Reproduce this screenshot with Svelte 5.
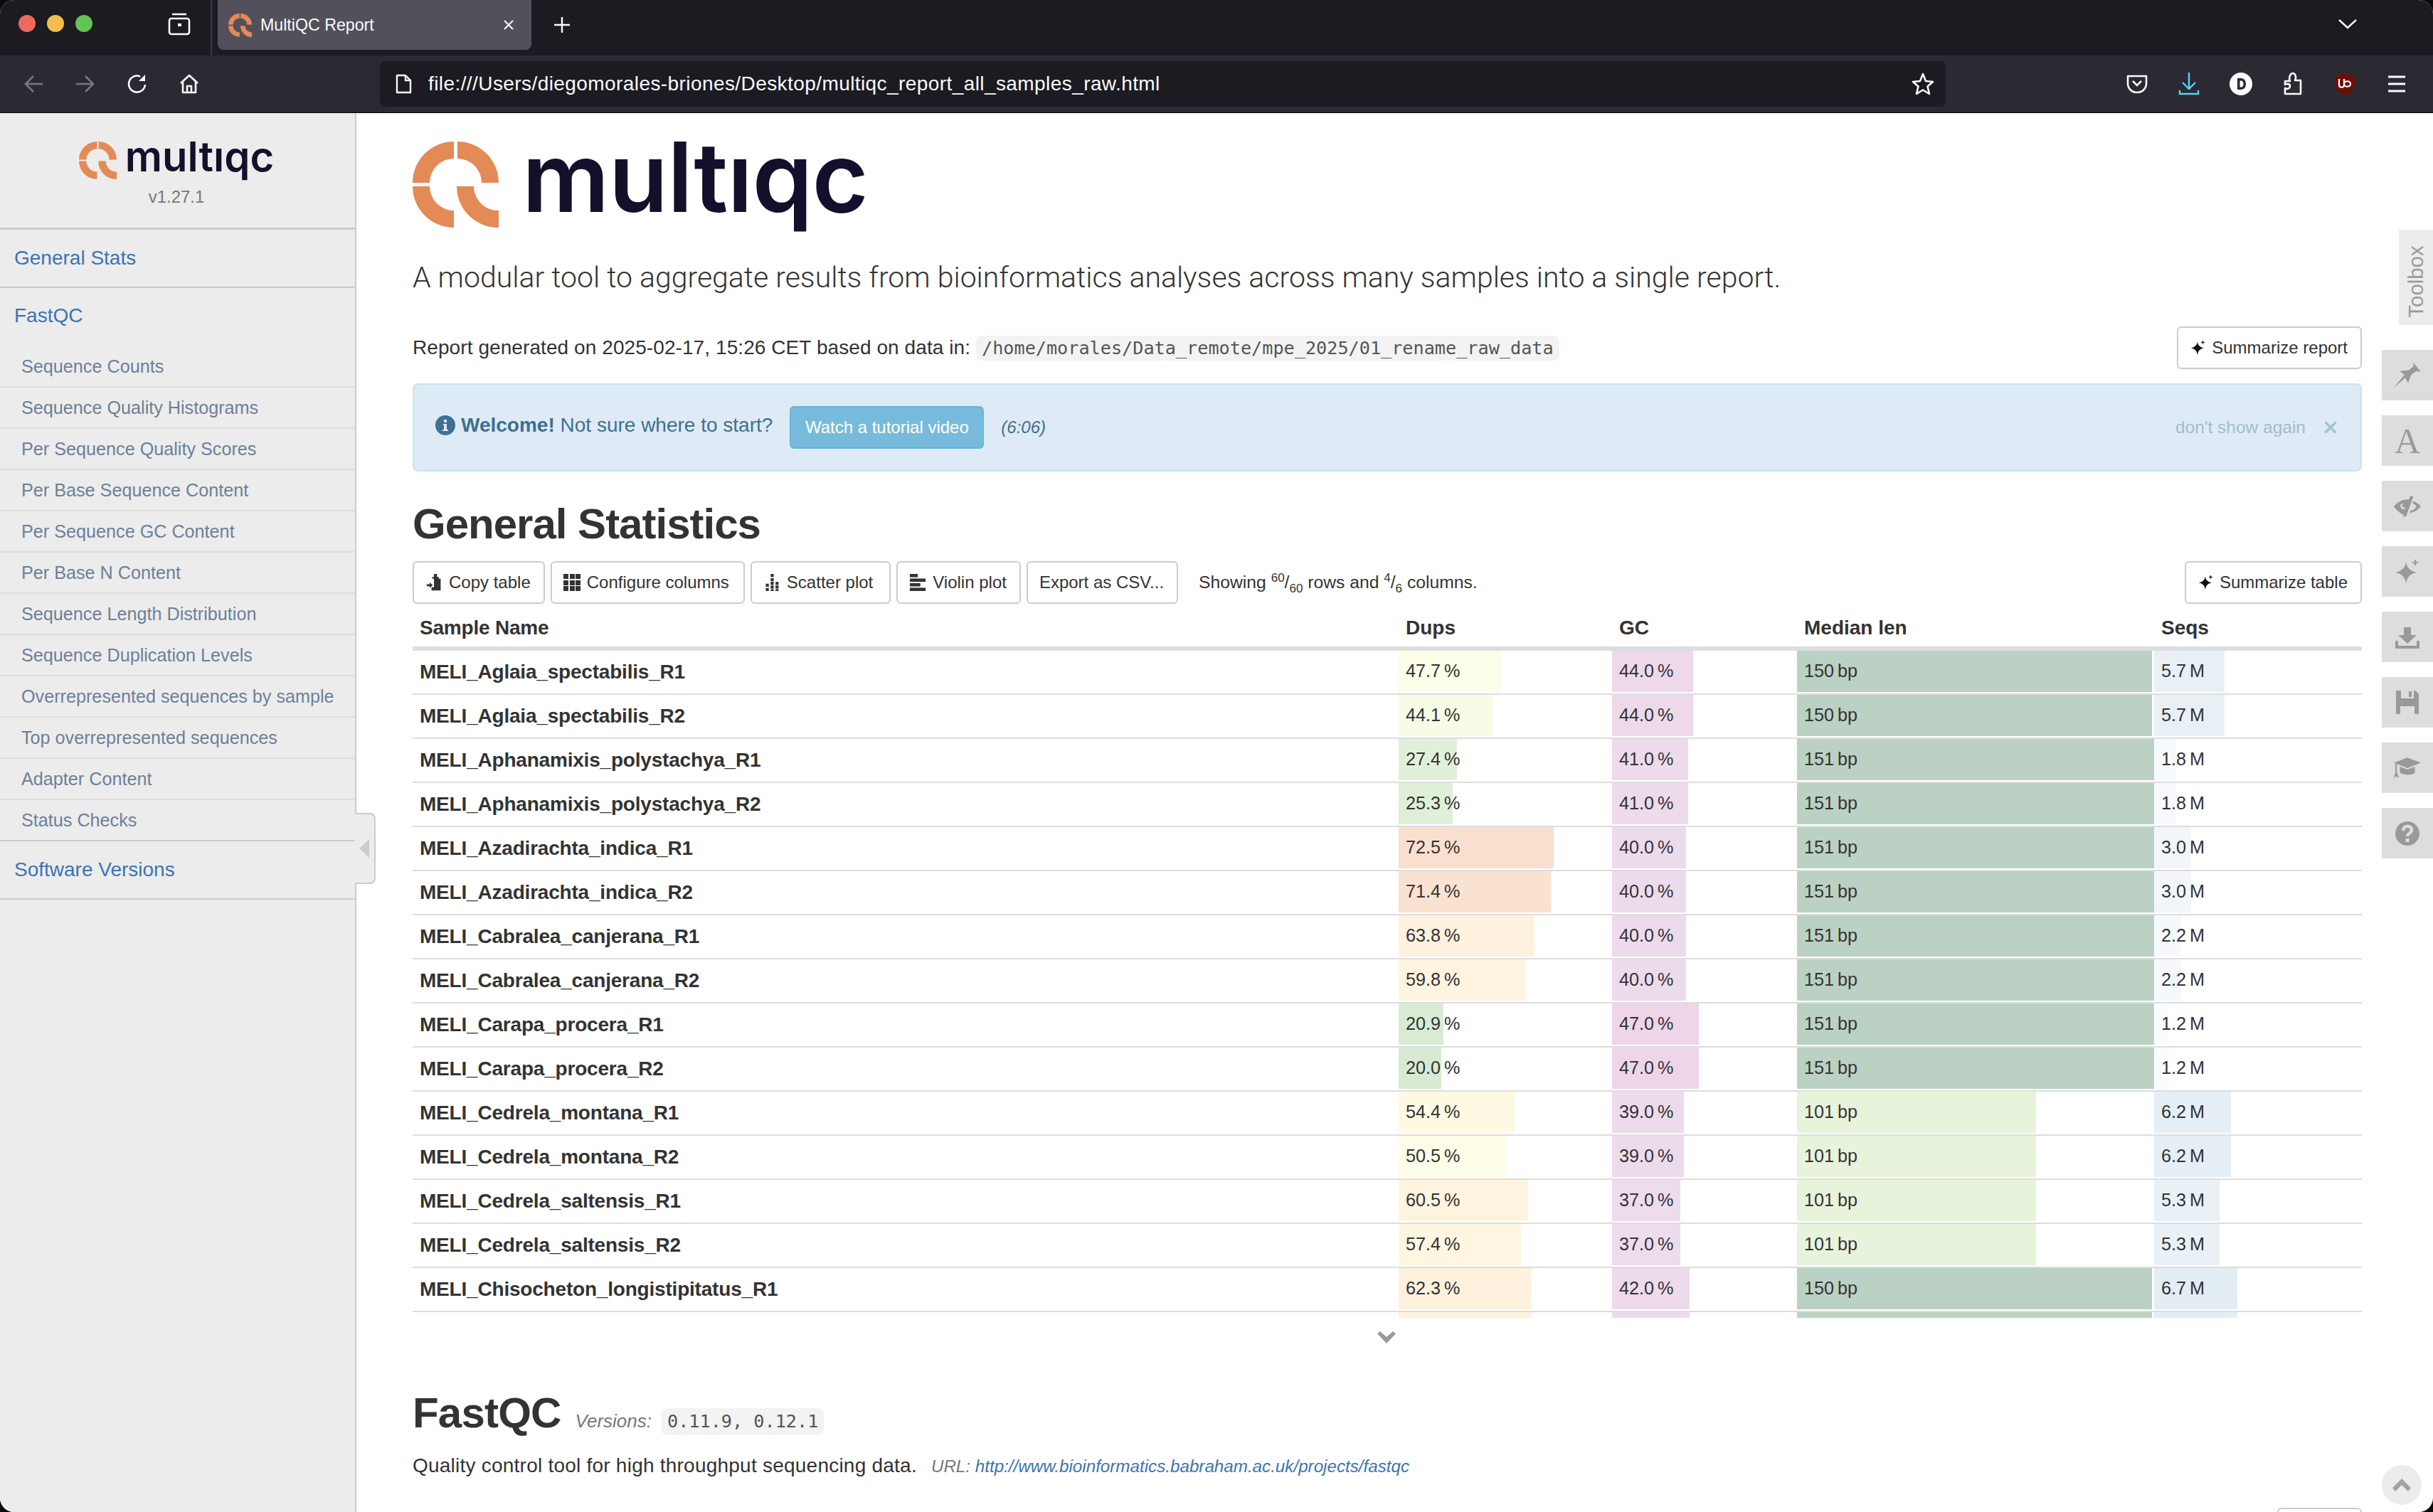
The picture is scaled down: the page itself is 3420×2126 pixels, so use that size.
<script>
  const subs = ['Sequence Counts','Sequence Quality Histograms','Per Sequence Quality Scores','Per Base Sequence Content','Per Sequence GC Content','Per Base N Content','Sequence Length Distribution','Sequence Duplication Levels','Overrepresented sequences by sample','Top overrepresented sequences','Adapter Content','Status Checks'];
  const raw = [
    ['Aglaia_spectabilis_R1',47.7,44,150,5.7],['Aglaia_spectabilis_R2',44.1,44,150,5.7],
    ['Aphanamixis_polystachya_R1',27.4,41,151,1.8],['Aphanamixis_polystachya_R2',25.3,41,151,1.8],
    ['Azadirachta_indica_R1',72.5,40,151,3.0],['Azadirachta_indica_R2',71.4,40,151,3.0],
    ['Cabralea_canjerana_R1',63.8,40,151,2.2],['Cabralea_canjerana_R2',59.8,40,151,2.2],
    ['Carapa_procera_R1',20.9,47,151,1.2],['Carapa_procera_R2',20.0,47,151,1.2],
    ['Cedrela_montana_R1',54.4,39,101,6.2],['Cedrela_montana_R2',50.5,39,101,6.2],
    ['Cedrela_saltensis_R1',60.5,37,101,5.3],['Cedrela_saltensis_R2',57.4,37,101,5.3],
    ['Chisocheton_longistipitatus_R1',62.3,42,150,6.7]
  ];
  const ramp = (stops, v) => {
    let a = stops[0], b = stops[stops.length - 1];
    for (let i = 0; i < stops.length - 1; i++) if (v >= stops[i][0] && v <= stops[i + 1][0]) { a = stops[i]; b = stops[i + 1]; }
    const t = b[0] === a[0] ? 0 : (v - a[0]) / (b[0] - a[0]);
    return `rgb(${[1, 2, 3].map((k) => Math.round(a[k] + (b[k] - a[k]) * t)).join(',')})`;
  };
  const dupStops = [[20,216,235,210],[27,227,240,216],[44,247,252,230],[50,254,255,233],[57,254,246,224],[64,254,241,221],[72.5,249,224,206]];
  const seqStops = [[1.2,250,252,254],[1.8,247,250,253],[3,242,246,251],[5.7,232,240,246],[6.7,226,237,244]];
  const gcStops = [[37,236,220,236],[44,237,217,233],[47,238,213,232]];
  const rows = raw.map(([n, d, g, m, s]) => ({
    name: 'MELI_' + n, d: d.toFixed(1), g: g.toFixed(1), m, s: s.toFixed(1),
    dw: d * 3, dc: ramp(dupStops, d), gw: g * 2.6, gc: ramp(gcStops, g),
    mw: m === 150 ? 499 : m === 151 ? 502 : 336, mc: m === 101 ? '#e8f3db' : '#bad1c3',
    sw: s * 17.4, sc: ramp(seqStops, s)
  }));
  const tail = rows[rows.length - 1];
  const toolIcons = ['pin','font','eye','spark','down','save','edu','help'];
</script>

{#snippet qlogo(cls)}
  <svg class={cls} viewBox="0 0 121 121" aria-hidden="true">
    <g fill="#e48a56">
      <path d="M0 58A58 58 0 0 1 58 0V24A34 34 0 0 0 24 58Z"/>
      <path d="M63 0A58 58 0 0 1 121 58H97A34 34 0 0 0 63 24Z"/>
      <path d="M0 63A58 58 0 0 0 58 121V97A34 34 0 0 1 24 63Z"/>
      <path d="M62 63H86A34 34 0 0 0 121 97V121A58 58 0 0 1 62 63Z"/>
    </g>
  </svg>
{/snippet}

{#snippet spark(cls)}
  <svg class={cls} viewBox="0 0 34 34" aria-hidden="true">
    <path d="M15 3Q16.500 15 30 18Q16.500 20 15 34Q13.500 20 0 18Q13.500 15 15 3Z"/>
    <path d="M27 0H29V3H32V5H29V8H27V5H24V3H27Z"/>
  </svg>
{/snippet}

<div class="window">
  <header class="tabbar">
    <div class="lights"><i class="red"></i><i class="yellow"></i><i class="green"></i></div>
    <svg class="tabs-ico" viewBox="0 0 32 32" fill="none" stroke="#fbfbfe" stroke-width="2.600" aria-hidden="true">
      <path d="M6 2H26"/><rect x="2" y="8" width="28" height="22" rx="3"/><rect x="14" y="15" width="5" height="4" fill="#fbfbfe" stroke="none"/>
    </svg>
    <div class="tab">
      {@render qlogo('fav')}
      <span class="tab-title">MultiQC Report</span>
      <svg class="tab-x" viewBox="0 0 16 16" stroke="#fbfbfe" stroke-width="2" aria-hidden="true"><path d="M2 2L14 14M14 2L2 14"/></svg>
    </div>
    <svg class="plus" viewBox="0 0 24 24" stroke="#fbfbfe" stroke-width="2.400" aria-hidden="true"><path d="M12 1V23M1 12H23"/></svg>
    <svg class="tabs-down" viewBox="0 0 26 14" fill="none" stroke="#fbfbfe" stroke-width="2.400" aria-hidden="true"><path d="M1 1L13 12L25 1"/></svg>
  </header>

  <nav class="toolbar">
    <div class="nav-btns">
      <svg viewBox="0 0 28 28" fill="none" stroke="#77777e" stroke-width="2.600" aria-hidden="true"><path d="M27 14H3M14 3L3 14L14 25"/></svg>
      <svg viewBox="0 0 28 28" fill="none" stroke="#77777e" stroke-width="2.600" aria-hidden="true"><path d="M1 14H25M14 3L25 14L14 25"/></svg>
      <svg viewBox="0 0 28 28" fill="none" stroke="#fbfbfe" stroke-width="2.600" aria-hidden="true"><path d="M25 15A11.500 11.500 0 1 1 18 3.500"/><path d="M25 1V10H16Z" fill="#fbfbfe" stroke="none"/></svg>
      <svg viewBox="0 0 28 28" fill="none" stroke="#fbfbfe" stroke-width="2.600" stroke-linejoin="round" aria-hidden="true"><path d="M2 13L14 2L26 13M5 11V26H23V11M11 26V17H17V26"/></svg>
    </div>
    <div class="urlbar">
      <svg class="file-ico" viewBox="0 0 24 28" fill="none" stroke="#fbfbfe" stroke-width="2.400" aria-hidden="true"><path d="M3 2H15L22 9V26H3Z" stroke-linejoin="round"/><path d="M15 2V9H22"/></svg>
      <span class="url">file:///Users/diegomorales-briones/Desktop/multiqc_report_all_samples_raw.html</span>
      <svg class="star" viewBox="0 0 32 32" fill="none" stroke="#fbfbfe" stroke-width="2.600" stroke-linejoin="round" aria-hidden="true"><path d="M16 2L20 12L30 13L22.500 19.500L25 30L16 24.500L7 30L9.500 19.500L2 13L12 12Z"/></svg>
    </div>
    <div class="ext">
      <svg viewBox="0 0 32 32" fill="none" stroke="#fbfbfe" stroke-width="2.600" aria-hidden="true"><path d="M3 5H29V15C29 23 23 28 16 28C9 28 3 23 3 15Z" stroke-linejoin="round"/><path d="M10 12L16 18L22 12"/></svg>
      <svg viewBox="0 0 32 32" fill="none" stroke="#5ad2f2" stroke-width="2.400" aria-hidden="true"><path d="M16 0V23M7 14L16 23L25 14M3 25V30H29V25"/></svg>
      <svg viewBox="0 0 32 32" aria-hidden="true"><circle cx="16" cy="16" r="16" fill="#fbfbfe"/><path d="M11 8H16C21 8 23 12 23 16C23 20 21 24 16 24H11ZM14.500 11.500V20.500H16C18.500 20.500 19.500 18.500 19.500 16C19.500 13.500 18.500 11.500 16 11.500Z" fill="#2b2a33" fill-rule="evenodd"/></svg>
      <svg viewBox="0 0 32 32" fill="none" stroke="#fbfbfe" stroke-width="2.600" stroke-linejoin="round" aria-hidden="true"><path d="M5 12H12C10 8 12 1 16 1C20 1 21 8 19 11H27V30H5V22C9 24 12 22 12 19C12 16 8 15 5 17Z"/></svg>
      <svg viewBox="0 0 32 32" aria-hidden="true"><path d="M16 0L20 3L30 5V17C30 24 23 29 16 32C9 29 2 24 2 17V5L12 3Z" fill="#6d0f08"/><path d="M8 9V17C8 22 15 22 15 17V9M15 16C15 11 24 11 24 16C24 21 15 21 15 16" fill="none" stroke="#fff" stroke-width="2.200"/></svg>
      <svg viewBox="0 0 32 32" stroke="#fbfbfe" stroke-width="3" aria-hidden="true"><path d="M4 6H28M4 16H28M4 26H28"/></svg>
    </div>
  </nav>

  <div class="page">
    <aside class="sidebar">
      <div class="side-logo">
        <div class="side-brand">
          {@render qlogo('q-small')}
          <span class="word word-small">multıqc</span>
        </div>
        <div class="version">v1.27.1</div>
      </div>
      <a class="top">General Stats</a>
      <a class="top nob">FastQC</a>
      <ul class="subs">
        {#each subs as s}<li>{s}</li>{/each}
      </ul>
      <a class="top">Software Versions</a>
    </aside>

    <main class="main">
      <div class="brand">
        {@render qlogo('q-big')}
        <span class="word word-big">multıqc</span>
      </div>
      <p class="lead">A modular tool to aggregate results from bioinformatics analyses across many samples into a single report.</p>

      <div class="report">
        <div class="report-text">Report generated on 2025-02-17, 15:26 CET based on data in: <code>/home/morales/Data_remote/mpe_2025/01_rename_raw_data</code></div>
        <button class="btn">{@render spark('ico-s')}Summarize report</button>
      </div>

      <div class="alert">
        <svg class="info" viewBox="0 0 28 28" aria-hidden="true"><circle cx="14" cy="14" r="14" fill="#3f7096"/><path d="M11 12H16V20H18V22H10V20H12V14H11ZM12 6H16V10H12Z" fill="#deebf6"/></svg>
        <span class="alert-text"><b>Welcome!</b> Not sure where to start?</span>
        <button class="watch">Watch a tutorial video</button>
        <em class="dur">(6:06)</em>
        <span class="dismiss">don't show again</span>
        <svg class="dismiss-x" viewBox="0 0 16 16" stroke="#a9c2d2" stroke-width="3" aria-hidden="true"><path d="M2 2L14 14M14 2L2 14"/></svg>
      </div>

      <h2 class="h-gs">General Statistics</h2>

      <div class="tbar">
        <button class="btn">
          <svg class="ico" viewBox="0 0 24 28" aria-hidden="true"><path d="M9 8V5H12V0H17V5H20V8H23V27H8V22H12V8ZM0 17H5V14L10 18.500L5 23V20H0Z" fill="#333"/></svg>Copy table
        </button>
        <button class="btn b-conf">
          <svg class="ico" viewBox="0 0 24 24" aria-hidden="true"><g fill="#333">{#each [0,9,17] as y}{#each [0,9,17] as x}<rect x={x} y={y} width="7" height="7"/>{/each}{/each}</g></svg>Configure columns
        </button>
        <button class="btn b-scat">
          <svg class="ico" viewBox="0 0 24 28" aria-hidden="true"><g fill="#333"><rect x="10" y="0" width="5" height="5"/><rect x="10" y="7" width="5" height="5"/><rect x="10" y="13" width="5" height="5"/><rect x="18" y="13" width="5" height="5"/><rect x="2" y="16" width="5" height="5"/><rect x="10" y="19" width="5" height="5"/><rect x="18" y="19" width="5" height="5"/><rect x="2" y="23" width="5" height="5"/><rect x="10" y="25" width="5" height="3"/><rect x="18" y="25" width="5" height="3"/></g></svg>Scatter plot
        </button>
        <button class="btn">
          <svg class="ico" viewBox="0 0 24 26" aria-hidden="true"><g fill="#333"><rect width="12" height="5"/><rect y="7" width="24" height="5"/><rect y="14" width="16" height="5"/><rect y="21" width="24" height="5"/></g></svg>Violin plot
        </button>
        <button class="btn">Export as CSV...</button>
        <span class="showing">Showing <sup>60</sup>/<sub>60</sub> rows and <sup>4</sup>/<sub>6</sub> columns.</span>
        <button class="btn push">{@render spark('ico-s')}Summarize table</button>
      </div>

      <div class="grid head">
        <div class="c-name">Sample Name</div><div class="c-h">Dups</div><div class="c-h">GC</div><div class="c-h">Median len</div><div class="c-h">Seqs</div>
      </div>
      <div class="body">
        {#each rows as r}
          <div class="grid row">
            <div class="c-name">{r.name}</div>
            <div><div class="bar" style:width="{r.dw}px" style:background={r.dc}>{r.d}&thinsp;%</div></div>
            <div><div class="bar" style:width="{r.gw}px" style:background={r.gc}>{r.g}&thinsp;%</div></div>
            <div><div class="bar" style:width="{r.mw}px" style:background={r.mc}>{r.m}&thinsp;bp</div></div>
            <div><div class="bar" style:width="{r.sw}px" style:background={r.sc}>{r.s}&thinsp;M</div></div>
          </div>
        {/each}
        <div class="grid row">
          <div></div>
          <div><div class="bar" style:width="{tail.dw}px" style:background={tail.dc}></div></div>
          <div><div class="bar" style:width="{tail.gw}px" style:background={tail.gc}></div></div>
          <div><div class="bar" style:width="{tail.mw}px" style:background={tail.mc}></div></div>
          <div><div class="bar" style:width="{tail.sw}px" style:background={tail.sc}></div></div>
        </div>
      </div>
      <svg class="more" viewBox="0 0 26 17" fill="#999" aria-hidden="true"><path d="M0 3L4 0L13 8L22 0L26 3L13 17Z"/></svg>

      <div class="fq-head">
        <h2>FastQC</h2>
        <small>Versions:</small>
        <code>0.11.9, 0.12.1</code>
      </div>
      <p class="fq-desc">Quality control tool for high throughput sequencing data. <em>URL: <a>http://www.bioinformatics.babraham.ac.uk/projects/fastqc</a></em></p>
      <div class="cut"></div>
    </main>

    <button class="side-toggle" aria-label="Hide sidebar">
      <svg viewBox="0 0 14 26" fill="#ccc" aria-hidden="true"><path d="M14 0V26L0 13Z"/></svg>
    </button>

    <div class="toolbox">
      <div class="tb-label"><span>Toolbox</span></div>
      {#each toolIcons as t}
        <div class="tb-btn">
          {#if t === 'pin'}
            <svg class="wide" viewBox="0 0 36 34" fill="#999" aria-hidden="true"><path d="M0 33L15 20L19 27L23 16L30 11L36 12L26 0L26 5L20 10L8 11L14 16Z"/></svg>
          {:else if t === 'font'}
            <span class="tb-a">A</span>
          {:else if t === 'eye'}
            <svg class="wide" viewBox="0 0 36 34" fill="#999" aria-hidden="true"><path fill-rule="evenodd" d="M0 17C6 10 14 7 21 8L13 28C8 26 3 22 0 17ZM11 13C9 14 8 16 9 18C10 21 13 22 15 20L14 18C12 19 11 18 11 16C11 15 12 14 13 14Z"/><path d="M22 3L26 4L16 31L12 30Z"/><path d="M26 10C30 12 33 14 36 17C32 22 27 25 21 26L22 23C26 22 29 20 30 17C29 15 27 14 25 13Z"/></svg>
          {:else if t === 'spark'}
            {@render spark('tb-spark')}
          {:else if t === 'down'}
            <svg viewBox="0 0 34 34" fill="#999" aria-hidden="true"><path d="M12 3H22V14H30L17 26L4 14H12Z"/><path d="M0 22H4V29H30V22H34V33H0Z"/></svg>
          {:else if t === 'save'}
            <svg viewBox="0 0 34 34" fill="#999" aria-hidden="true"><path fill-rule="evenodd" d="M2 0H8V11H26V0H28L33 5V32C33 33 32 33 31 33H27V22H7V33H3C2 33 1 33 1 32V1C1 0 2 0 2 0ZM19 1H23V9H19Z"/></svg>
          {:else if t === 'edu'}
            <svg class="wide" viewBox="0 0 36 34" fill="#999" aria-hidden="true"><path d="M18 3L36 10L18 17L0 10Z"/><path d="M8 15L18 19L28 15V23C24 27 14 27 8 23Z"/><path d="M2 11H4V23L7 30L3 28L0 31L2 23Z"/></svg>
          {:else}
            <svg viewBox="0 0 34 34" aria-hidden="true"><circle cx="17" cy="17" r="17" fill="#999"/><path d="M11 13C11 5 23 5 23 12C23 17 17 16 17 21" fill="none" stroke="#ddd" stroke-width="4.500"/><rect x="14.500" y="24" width="5" height="5" fill="#ddd"/></svg>
          {/if}
        </div>
      {/each}
    </div>

    <button class="totop" aria-label="Back to top">
      <svg viewBox="0 0 26 18" fill="#a3a3a3" aria-hidden="true"><path d="M13 0L26 13L22 18L13 9L4 18L0 13Z"/></svg>
    </button>
  </div>
</div>

<style>
  :global(body) { margin: 0; background: #0b0b0b; }
  .window {
    width: 3420px; height: 2126px; overflow: hidden; border-radius: 20px;
    display: flex; flex-direction: column; background: #fff;
    font-family: "Liberation Sans", Arial, sans-serif; color: #333; font-size: 28px;
  }
  button { font-family: inherit; cursor: pointer; }

  .tabbar { height: 78px; flex: none; background: #1c1b22; display: flex; align-items: flex-start; position: relative; }
  .lights { display: flex; gap: 16px; margin: 21px 0 0 26px; width: 210px; flex: none; }
  .lights i { width: 24px; height: 24px; border-radius: 50%; }
  .red { background: #ee6a5f; } .yellow { background: #f5bd4f; } .green { background: #61c454; }
  .tabs-ico { width: 32px; height: 32px; flex: none; margin: 18px 28px 0 0; }
  .tab {
    width: 441px; height: 70px; margin-left: 10px; flex: none; background: #52515b; border-radius: 0 0 8px 8px;
    display: flex; align-items: center; box-sizing: border-box; padding: 0 16px 0 15px; position: relative;
  }
  .tab::before { content: ''; position: absolute; left: -10px; top: 0; width: 2px; height: 78px; background: #3a3a40; }
  .fav { width: 33px; height: 33px; flex: none; }
  .tab-title { margin-left: 12px; font-size: 23.200px; color: #fbfbfe; flex: 1; }
  .tab-x { width: 16px; height: 16px; margin-right: 8px; }
  .plus { width: 24px; height: 24px; margin: 23px 0 0 31px; flex: none; }
  .tabs-down { width: 26px; height: 14px; margin: 27px 107px 0 auto; flex: none; }

  .toolbar { height: 81px; flex: none; box-sizing: border-box; background: #2b2a33; border-bottom: 1px solid #000; display: flex; align-items: center; }
  .nav-btns { display: flex; gap: 45px; margin-left: 33px; width: 501px; flex: none; }
  .nav-btns svg { width: 28px; height: 28px; }
  .urlbar {
    width: 2201px; height: 64px; flex: none; background: #1c1b22; border-radius: 8px; box-sizing: border-box;
    display: flex; align-items: center; padding: 0 16px 0 21px;
  }
  .file-ico { width: 24px; height: 28px; flex: none; }
  .url { margin-left: 23px; font-size: 28px; letter-spacing: 0.420px; color: #fbfbfe; flex: 1; white-space: nowrap; }
  .star { width: 32px; height: 32px; flex: none; }
  .ext { display: flex; gap: 41px; margin-left: 253px; }
  .ext svg { width: 32px; height: 32px; flex: none; }

  .page { flex: 1; min-height: 0; display: flex; position: relative; }
  .sidebar { width: 501px; flex: none; box-sizing: border-box; background: #ececec; border-right: 2px solid #ccc; }
  .side-logo { height: 161px; border-bottom: 3px solid #ccc; box-sizing: content-box; display: flex; flex-direction: column; align-items: center; padding-right: 3px; }
  .side-brand { display: flex; align-items: flex-start; gap: 12px; margin-top: 40px; height: 53px; }
  .q-small { width: 53px; height: 53px; flex: none; }
  .word { font-family: Inter, "Liberation Sans", sans-serif; font-weight: 600; color: #13102b; display: block; }
  .word-small { font-size: 58px; line-height: 54px; letter-spacing: 0; margin-top: -6px; }
  .version { margin-top: 10px; font-size: 24px; color: #777; line-height: 30px; }
  .top { display: flex; align-items: center; height: 82px; box-sizing: border-box; padding-left: 20px; color: #3b74b4; font-size: 28px; border-bottom: 2px solid #ccc; }
  .top.nob { border-bottom: 0; height: 82px; padding-bottom: 4px; }
  .subs { list-style: none; margin: 0; padding: 0; border-bottom: 2px solid #ccc; }
  .subs li { height: 58px; line-height: 56px; box-sizing: border-box; padding-left: 30px; font-size: 25.200px; color: #6d8098; border-bottom: 2px solid #ddd; white-space: nowrap; }
  .subs li:last-child { border-bottom: 0; height: 56px; }

  .main { flex: 1; min-width: 0; box-sizing: border-box; padding: 0 100px 0 79px; overflow: hidden; }
  .brand { display: flex; align-items: flex-start; gap: 33px; margin-top: 40px; height: 121px; }
  .q-big { width: 121px; height: 121px; flex: none; }
  .word-big { font-size: 136px; line-height: 121px; letter-spacing: -0.700px; margin-top: -11px; }
  .lead { margin: 45px 0 0; height: 50px; line-height: 50px; font-family: Roboto, "Liberation Sans", sans-serif; font-weight: 300; font-size: 41px; white-space: nowrap; color: #333; }
  .report { display: flex; justify-content: space-between; align-items: center; margin-top: 44px; height: 60px; font-size: 28px; }
  .report-text { letter-spacing: 0.080px; }
  code { font-family: "DejaVu Sans Mono", "Liberation Mono", monospace; font-size: 25.200px; line-height: 32px; letter-spacing: 0; background: #f3f3f3; color: #555; border-radius: 8px; padding: 3px 8px; }
  .btn {
    height: 60px; box-sizing: border-box; background: #fff; border: 2px solid #ccc; border-radius: 6px; color: #333;
    font-size: 24px; padding: 0 18px 0 16px; display: inline-flex; align-items: center; gap: 9px; white-space: nowrap; flex: none;
  }
  .b-conf { padding-right: 20px; }
  .b-scat { padding-right: 23px; }
  .ico { width: 24px; height: 24px; flex: none; }
  .btn :global(.ico-s) { width: 20px; height: 24px; flex: none; fill: #111; margin-left: 2px; }
  .alert {
    margin-top: 20px; height: 124px; box-sizing: border-box; background: #deebf6; border: 2px solid #c5e5f0; border-radius: 8px;
    display: flex; align-items: center; padding: 0 32px 0 30px; color: #3f6f92;
  }
  .info { width: 28px; height: 28px; flex: none; margin-top: -6px; }
  .alert-text { margin-left: 8px; font-size: 28px; margin-top: -6px; }
  .watch { margin-left: 24px; height: 60px; width: 273px; background: #77bbdc; border: 2px solid #6bb5d5; border-radius: 6px; color: #fff; font-size: 24px; padding: 0; flex: none; }
  .dur { margin-left: 24px; font-size: 24px; }
  .dismiss { margin-left: auto; font-size: 24.500px; color: #a4bccb; }
  .dismiss-x { width: 20px; height: 20px; margin-left: 25px; }
  h2 { font-size: 60px; font-weight: 700; margin: 0; color: #333; }
  .h-gs { height: 70px; line-height: 70px; margin-top: 39px; letter-spacing: -1px; }
  .tbar { display: flex; align-items: center; gap: 8px; margin-top: 17px; }
  .showing { margin-left: 21px; font-size: 24.700px; }
  sup, sub { font-size: 17px; line-height: 0; }
  .push { margin-left: auto; }
  .grid { display: grid; grid-template-columns: 1386px 300px 260px 502px 292px; }
  .head { height: 66px; box-sizing: border-box; border-bottom: 6px solid #ddd; padding-top: 8px; font-weight: 700; align-items: center; }
  .c-name { padding-left: 10px; font-weight: 700; font-size: 28px; letter-spacing: -0.200px; }
  .c-h { padding-left: 10px; }
  .body { height: 938px; overflow: hidden; }
  .row { height: 62px; box-sizing: border-box; border-bottom: 2px solid #ddd; }
  .row .c-name { line-height: 60px; }
  .bar { height: 58px; line-height: 56px; box-sizing: border-box; padding-left: 10px; font-size: 25.200px; white-space: nowrap; }
  .more { display: block; width: 26px; height: 17px; margin: 19px 0 0 1356px; }
  .fq-head { display: flex; align-items: baseline; margin-top: 63px; height: 70px; line-height: 70px; }
  .fq-head h2 { letter-spacing: -0.800px; }
  .fq-head small { font-size: 26px; font-style: italic; color: #777; margin-left: 20px; }
  .fq-head code { margin-left: 14px; }
  .fq-desc { margin: 21px 0 0; font-size: 28px; letter-spacing: 0.230px; line-height: 36px; white-space: nowrap; }
  .fq-desc em { font-size: 24.200px; letter-spacing: 0; color: #777; margin-left: 12px; }
  .fq-desc a { color: #3b74b4; }
  .cut { width: 119px; height: 60px; box-sizing: border-box; margin: 40px 0 0 auto; border: 2px solid #ccc; border-radius: 6px; }

  .side-toggle {
    position: absolute; left: 499px; top: 984px; width: 29px; height: 100px; box-sizing: border-box; padding: 0 0 0 6px;
    background: #ececec; border: 2px solid #ccc; border-left: 0; border-radius: 0 8px 8px 0; display: flex; align-items: center;
  }
  .side-toggle svg { width: 14px; height: 26px; }

  .toolbox { position: absolute; right: 0; top: 164px; width: 72px; display: flex; flex-direction: column; align-items: flex-end; gap: 21px; }
  .tb-label { width: 48px; height: 134px; box-sizing: border-box; padding-top: 12px; background: #ececec; display: flex; align-items: center; justify-content: center; margin-bottom: 14px; }
  .tb-label span { display: block; transform: rotate(-90deg); font-size: 29.400px; color: #999; white-space: nowrap; }
  .tb-btn { width: 72px; height: 71px; background: #ddd; display: flex; align-items: center; justify-content: center; }
  .tb-btn svg { width: 34px; height: 34px; }
  .tb-btn svg.wide { width: 38px; height: 36px; }
  .tb-a { font-family: "Liberation Serif", serif; font-size: 50px; line-height: 1; color: #999; }
  .tb-btn :global(.tb-spark) { fill: #999; }

  .totop { position: absolute; right: 16px; bottom: 10px; width: 56px; height: 56px; border-radius: 50%; background: #ececec; border: 0; padding: 0; display: flex; align-items: center; justify-content: center; }
  .totop svg { width: 26px; height: 18px; }
</style>
